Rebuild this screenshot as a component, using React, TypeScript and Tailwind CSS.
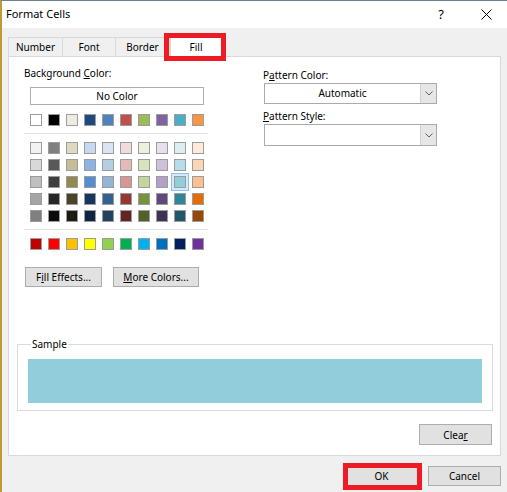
import type { ReactNode } from "react";

const THEME_ROW = ["#FFFFFF", "#000000", "#EEECE1", "#1F497D", "#4F81BD", "#C0504D", "#9BBB59", "#8064A2", "#4BACC6", "#F79646"];

const TINT_ROWS = [
  ["#F2F2F2", "#7F7F7F", "#DDD9C3", "#C6D9F0", "#DBE5F1", "#F2DCDB", "#EBF1DD", "#E5E0EC", "#DBEEF3", "#FDEADA"],
  ["#D8D8D8", "#595959", "#C4BD97", "#8DB3E2", "#B8CCE4", "#E5B9B7", "#D7E3BC", "#CCC1D9", "#B7DDE8", "#FBD5B5"],
  ["#BFBFBF", "#3F3F3F", "#938953", "#548DD4", "#95B3D7", "#D99694", "#C3D69B", "#B2A2C7", "#92CDDC", "#FAC08F"],
  ["#A5A5A5", "#262626", "#494429", "#17365D", "#366092", "#953734", "#76923C", "#5F497A", "#31859B", "#E36C09"],
  ["#7F7F7F", "#0C0C0C", "#1D1B10", "#0F243E", "#244061", "#632423", "#4F6128", "#3F3151", "#205867", "#974806"],
];

const STANDARD_ROW = ["#C00000", "#FF0000", "#FFC000", "#FFFF00", "#92D050", "#00B050", "#00B0F0", "#0070C0", "#002060", "#7030A0"];

const SELECTED = "#92CDDC";

function Swatch({ color, selected }: { color: string; selected?: boolean }) {
  return (
    <div className="relative h-[12px] w-[12px]">
      {selected && <span className="absolute -inset-[3px] border border-[#8CC3F0] bg-[#D3EAFB]" />}
      <span className="relative block h-full w-full border border-[#9C9C9C]" style={{ backgroundColor: color }} />
    </div>
  );
}

function SwatchRow({ colors }: { colors: string[] }) {
  return (
    <div className="ml-[6px] flex gap-[6px]">
      {colors.map((c, i) => (
        <Swatch key={i} color={c} selected={c === SELECTED} />
      ))}
    </div>
  );
}

function Button({ children, className = "" }: { children: ReactNode; className?: string }) {
  return (
    <div className={`flex items-center justify-center border border-[#ADADAD] bg-[#E1E1E1] leading-none ${className}`}>
      {children}
    </div>
  );
}

function Chevron() {
  return (
    <svg width="8" height="5" viewBox="0 0 8 5" className="text-[#606060]">
      <path d="M0.5 0.5 L4 4 L7.5 0.5" fill="none" stroke="currentColor" strokeWidth="1" />
    </svg>
  );
}

function Select({ value, className = "" }: { value?: string; className?: string }) {
  return (
    <div className={`flex w-[173px] border border-[#ABABAB] bg-white ${className}`}>
      <div className="flex flex-1 items-center justify-center">{value}</div>
      <div className="flex w-[16px] items-center justify-center border-l border-[#D0D0D0] bg-[#E6E6E6]">
        <Chevron />
      </div>
    </div>
  );
}

export default function App() {
  return (
    <div className="relative h-[492px] w-[507px] overflow-hidden border-t border-l-2 border-t-[#6E7F90] border-l-[#BF9B35] bg-[#F0F0F0] font-['Noto_Sans',sans-serif] text-[10px] text-black">
      {/* title bar */}
      <div className="flex h-[27px] items-center bg-white pl-[4px]">
        <span className="text-[11px]">Format Cells</span>
        <span className="ml-auto mr-[37px] text-[13px] leading-none">?</span>
        <svg width="11" height="11" viewBox="0 0 11 11" className="mr-[15px]">
          <path d="M0.5 0.5 L10.5 10.5 M10.5 0.5 L0.5 10.5" stroke="#000" strokeWidth="1" />
        </svg>
      </div>

      {/* tabs */}
      <div className="flex h-[28px] items-end pl-[6px]">
        <div className="flex h-[19px] w-[55px] items-center justify-center border border-b-0 border-[#D9D9D9]">Number</div>
        <div className="flex h-[19px] w-[53px] items-center justify-center border border-b-0 border-l-0 border-[#D9D9D9]">Font</div>
        <div className="flex h-[19px] w-[54px] items-center justify-center border border-b-0 border-l-0 border-[#D9D9D9]">Border</div>
        <div className="relative z-10 -mb-px flex h-[23px] w-[52px] items-center justify-center border border-b-0 border-[#D9D9D9] bg-white pt-[2px]">
          Fill
          <span className="absolute -top-[2px] -right-[5px] -bottom-[4px] -left-[7px] border-[5px] border-[#ED1C24]" />
        </div>
      </div>

      {/* panel */}
      <div className="ml-[6px] flex h-[400px] w-[493px] flex-col border border-[#D9D9D9] bg-white">
        <div className="flex pl-[15px] pt-[9px]">
          <div className="w-[239px]">
            <div className="leading-[14px]">
              Background <span className="underline">C</span>olor:
            </div>
            <div className="mt-[7px] ml-[6px] flex h-[18px] w-[174px] items-center justify-center border border-[#ADADAD] bg-white">
              No Color
            </div>
            <div className="mt-[9px]">
              <SwatchRow colors={THEME_ROW} />
            </div>
            <div className="mt-[7px] h-px w-[184px] bg-[#E3E3E3]" />
            <div className="mt-[8px] flex flex-col gap-[5px]">
              {TINT_ROWS.map((row, i) => (
                <SwatchRow key={i} colors={row} />
              ))}
            </div>
            <div className="mt-[7px] h-px w-[184px] bg-[#E3E3E3]" />
            <div className="mt-[8px]">
              <SwatchRow colors={STANDARD_ROW} />
            </div>
            <div className="mt-[17px] ml-[1px] flex gap-[11px]">
              <Button className="h-[20px] w-[77px]">
                <span>
                  F<span className="underline">i</span>ll Effects...
                </span>
              </Button>
              <Button className="h-[20px] w-[86px]">
                <span>
                  <span className="underline">M</span>ore Colors...
                </span>
              </Button>
            </div>
          </div>

          <div className="pt-[2px]">
            <div className="leading-[14px]">
              P<span className="underline">a</span>ttern Color:
            </div>
            <Select value="Automatic" className="mt-[1px] ml-[1px] h-[21px]" />
            <div className="mt-[5px] leading-[14px]">
              <span className="underline">P</span>attern Style:
            </div>
            <Select className="mt-[1px] ml-[1px] h-[22px]" />
          </div>
        </div>

        <fieldset className="mt-[50px] ml-[8px] w-[476px] border border-[#DCDCDC] px-[10px] pb-[7px]">
          <legend className="ml-[3px] px-[1px] leading-[14px]">Sample</legend>
          <div className="mt-[8px] h-[44px] w-[454px] bg-[#92CDDC]" />
        </fieldset>

        <div className="mt-[13px] mr-[8px] flex justify-end">
          <Button className="h-[21px] w-[73px]">
            <span>
              Clea<span className="underline">r</span>
            </span>
          </Button>
        </div>
      </div>

      {/* dialog buttons */}
      <div className="mt-[10px] flex justify-end gap-[10px] pr-[6px]">
        <div className="relative">
          <Button className="h-[20px] w-[73px]">OK</Button>
          <span className="absolute -top-[3px] -right-[4px] -bottom-[4px] -left-[2px] border-[5px] border-[#ED1C24]" />
        </div>
        <Button className="h-[20px] w-[73px]">Cancel</Button>
      </div>
    </div>
  );
}
